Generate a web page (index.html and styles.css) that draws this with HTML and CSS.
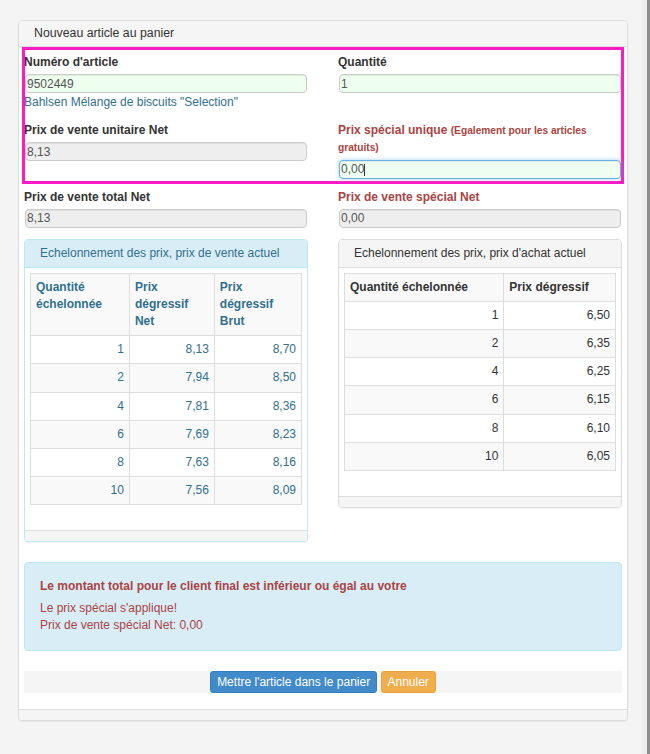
FILE: index.html
```html
<!DOCTYPE html>
<html lang="fr">
<head>
  <meta charset="UTF-8">
  <meta name="viewport" content="width=device-width, initial-scale=1.0">
  <title>Nouveau article au panier</title>
  <link rel="stylesheet" href="styles.css">
</head>
<body>
  <div class="panel">
    <div class="panel-heading">Nouveau article au panier</div>
    <div class="panel-body">

      <!-- Article + prices (highlighted) -->
      <div class="highlight">
        <div class="form-grid">
          <div class="form-group">
            <label>Numéro d'article</label>
            <input class="form-control valid" type="text" value="9502449">
            <a class="article-name" href="#">Bahlsen Mélange de biscuits "Selection"</a>
          </div>
          <div class="form-group">
            <label>Quantité</label>
            <input class="form-control valid" type="text" value="1">
          </div>
          <div class="form-group">
            <label>Prix de vente unitaire Net</label>
            <input class="form-control" type="text" value="8,13" readonly>
          </div>
          <div class="form-group">
            <label class="text-danger">Prix spécial unique <small>(Egalement pour les articles gratuits)</small></label>
            <div class="field-wrap">
              <input class="form-control valid focused" type="text" value="0,00">
              <span class="caret"></span>
            </div>
          </div>
        </div>
      </div>

      <div class="form-grid totals">
        <div class="form-group">
          <label>Prix de vente total Net</label>
          <input class="form-control" type="text" value="8,13" readonly>
        </div>
        <div class="form-group">
          <label class="text-danger">Prix de vente spécial Net</label>
          <input class="form-control" type="text" value="0,00" readonly>
        </div>
      </div>

      <!-- Price scales -->
      <div class="scales">
        <div class="panel panel-info">
          <div class="panel-heading">Echelonnement des prix, prix de vente actuel</div>
          <div class="panel-body">
            <table class="table">
              <thead>
                <tr><th>Quantité échelonnée</th><th>Prix dégressif Net</th><th>Prix dégressif Brut</th></tr>
              </thead>
              <tbody>
                <tr><td>1</td><td>8,13</td><td>8,70</td></tr>
                <tr><td>2</td><td>7,94</td><td>8,50</td></tr>
                <tr><td>4</td><td>7,81</td><td>8,36</td></tr>
                <tr><td>6</td><td>7,69</td><td>8,23</td></tr>
                <tr><td>8</td><td>7,63</td><td>8,16</td></tr>
                <tr><td>10</td><td>7,56</td><td>8,09</td></tr>
              </tbody>
            </table>
          </div>
          <div class="panel-footer"></div>
        </div>

        <div class="panel">
          <div class="panel-heading">Echelonnement des prix, prix d'achat actuel</div>
          <div class="panel-body">
            <table class="table">
              <thead>
                <tr><th>Quantité échelonnée</th><th>Prix dégressif</th></tr>
              </thead>
              <tbody>
                <tr><td>1</td><td>6,50</td></tr>
                <tr><td>2</td><td>6,35</td></tr>
                <tr><td>4</td><td>6,25</td></tr>
                <tr><td>6</td><td>6,15</td></tr>
                <tr><td>8</td><td>6,10</td></tr>
                <tr><td>10</td><td>6,05</td></tr>
              </tbody>
            </table>
          </div>
          <div class="panel-footer"></div>
        </div>
      </div>

      <div class="alert">
        <div class="alert-title">Le montant total pour le client final est inférieur ou égal au votre</div>
        <div>Le prix spécial s'applique!</div>
        <div>Prix de vente spécial Net: 0,00</div>
      </div>

      <div class="actions">
        <button class="btn btn-primary">Mettre l'article dans le panier</button>
        <button class="btn btn-warning">Annuler</button>
      </div>
    </div>
    <div class="panel-footer"></div>
  </div>
</body>
</html>
```

FILE: styles.css
```css
html {
  background-color: #f4f4f4;
}
body {
  margin: 0;
  padding: 20px 0 0 18px;
  min-height: 100vh;
  box-sizing: border-box;
  border-right: 3px solid #8e8e8e;
  box-shadow: inset -5px 0 0 #eeeeee;
  font-family: "Liberation Sans", Arial, sans-serif;
  font-size: 12px;
  line-height: 1.428571;
  color: #333;
}

/* Panels */
.panel {
  background-color: #fff;
  border: 1px solid #ddd;
  border-radius: 4px;
  box-shadow: 0 1px 1px rgba(0, 0, 0, 0.05);
}
body > .panel {
  width: 610px;
  box-sizing: border-box;
}
.panel-heading {
  background-color: #f5f5f5;
  border-bottom: 1px solid #ddd;
  border-radius: 3px 3px 0 0;
  padding: 5px 15px;
}
body > .panel > .panel-heading {
  padding: 4px 15px;
  font-size: 12.3px;
  line-height: 17px;
}
body > .panel > .panel-body {
  padding: 2px 5px 5px;
}
.panel-footer {
  background-color: #f5f5f5;
  border-top: 1px solid #ddd;
  border-radius: 0 0 3px 3px;
  height: 10px;
}
.panel-info {
  border-color: #bce8f1;
  color: #31708f;
}
.panel-info .panel-heading {
  background-color: #d9edf7;
  border-bottom-color: #bce8f1;
}
.scales .panel-body {
  padding: 5px;
}

/* Form */
.highlight {
  outline: 3px solid #ff1ac6;
  outline-offset: -1px;
  padding: 5px 0 3px;
}
.form-grid {
  display: grid;
  grid-template-columns: 1fr 1fr;
  column-gap: 30px;
  row-gap: 11px;
}
.totals {
  margin-top: 7px;
  margin-bottom: 11px;
}
.form-group label {
  display: block;
  font-weight: bold;
  margin-bottom: 3px;
}
.form-group label small {
  font-size: 10.2px;
  line-height: 1;
}
.text-danger {
  color: #a94442;
}
.form-control {
  display: block;
  box-sizing: border-box;
  width: calc(100% - 2px);
  height: 19px;
  margin: 0 1px;
  padding: 0 1px;
  border: 1px solid #ccc;
  border-radius: 4px;
  background-color: #fff;
  box-shadow: inset 0 1px 1px rgba(0, 0, 0, 0.075);
  font-family: inherit;
  font-size: 12px;
  color: #555;
  outline: none;
}
.form-control[readonly] {
  background-color: #eee;
}
.form-control.valid {
  background-color: #efffef;
}
.form-control.focused {
  border-color: #66afe9;
  box-shadow: inset 0 1px 1px rgba(0, 0, 0, 0.075), 0 0 4px rgba(102, 175, 233, 0.6);
}
.field-wrap {
  position: relative;
}
.caret {
  position: absolute;
  left: 26px;
  top: 4px;
  width: 1px;
  height: 12px;
  background-color: #333;
}
.article-name {
  display: block;
  color: #31708f;
  text-decoration: none;
  margin-top: 1px;
}

/* Price scale tables */
.scales {
  display: grid;
  grid-template-columns: 1fr 1fr;
  column-gap: 30px;
  align-items: start;
  margin-bottom: 20px;
}
.table {
  width: 100%;
  border-collapse: collapse;
  margin-bottom: 20px;
}
.table th,
.table td {
  border: 1px solid #ddd;
  padding: 5px;
  vertical-align: top;
}
.table th {
  text-align: left;
  background-color: #f9f9f9;
}
.table td {
  text-align: right;
}
.table tbody tr:nth-child(even) {
  background-color: #f9f9f9;
}

/* Alert */
.alert {
  background-color: #d9edf7;
  border: 1px solid #bce8f1;
  border-radius: 4px;
  padding: 15px;
  color: #a94442;
  margin-bottom: 20px;
}
.alert-title {
  font-weight: bold;
  margin-bottom: 5px;
}

/* Buttons */
.actions {
  background-color: #f5f5f5;
  text-align: center;
  margin-bottom: 11px;
  height: 22px;
}
.btn {
  display: inline-block;
  vertical-align: top;
  font-family: inherit;
  font-size: 12px;
  line-height: 16px;
  padding: 2px 6px;
  border: 1px solid transparent;
  border-radius: 3px;
  color: #fff;
  cursor: pointer;
}
.btn-primary {
  background-color: #428bca;
  border-color: #357ebd;
}
.btn-warning {
  background-color: #f0ad4e;
  border-color: #eea236;
}
```
